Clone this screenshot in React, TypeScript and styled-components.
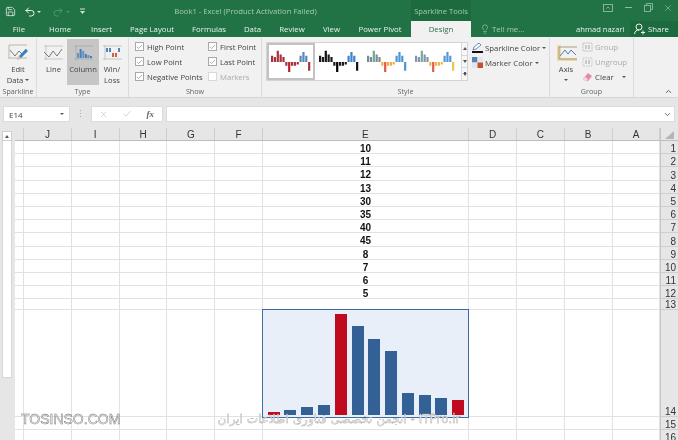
import React from "react";
import styled, { createGlobalStyle } from "styled-components";
import { Check, ChevronDown, ChevronUp, Lightbulb, Redo2, Save, Undo2, X } from "lucide-react";

const GlobalStyle = createGlobalStyle`
  html, body {
    margin: 0;
    padding: 0;
    overflow: hidden;
    background: #fff;
  }
  * {
    box-sizing: border-box;
  }
`;

const uiFont = `"Open Sans", "Noto Sans", sans-serif`;

const tabs: [string, number][] = [
  ["File", 38],
  ["Home", 44],
  ["Insert", 39],
  ["Page Layout", 62],
  ["Formulas", 52],
  ["Data", 35],
  ["Review", 44],
  ["View", 35],
  ["Power Pivot", 62],
];

const columns: [string, number][] = [
  ["", 9],
  ["J", 47.8],
  ["I", 47.8],
  ["H", 47.8],
  ["G", 47.8],
  ["F", 47.5],
  ["E", 206.5],
  ["D", 47.8],
  ["C", 47.8],
  ["B", 47.8],
  ["A", 47.8],
];

const cellValues = ["10", "11", "12", "13", "30", "35", "40", "45", "8", "7", "6", "5"];
const rowHeights = [...cellValues.map(() => 13.2), 10.5, 107, 13, 13];

const chartValues = [5, 6, 7, 8, 45, 40, 35, 30, 13, 12, 11, 10];
const redBars = [0, 4, 11];

const sparkValues = [5, 4, 9, 6, 4, -3, -8, -3, -3, -2, 5, 8, 5, -7];

const sparkStyles: { base: string; accent: string; neg: string; low: string; high: string; last: string }[] = [
  { base: "#a8323c", accent: "#5b86b8", neg: "#a8323c", low: "#b8202c", high: "#a8323c", last: "#a8323c" },
  { base: "#1c1c1c", accent: "#3f83c4", neg: "#1c1c1c", low: "#000", high: "#111", last: "#111" },
  { base: "#7d8a96", accent: "#4f96cf", neg: "#efb040", low: "#e2574a", high: "#68ad92", last: "#4f96cf" },
  { base: "#8794a8", accent: "#5a96d6", neg: "#f0b54a", low: "#e5584e", high: "#72ab9c", last: "#e8c64c" },
];

function MiniSpark({ scheme }: { scheme: number }) {
  const s = sparkStyles[scheme];
  return (
    <svg width="40" height="24" viewBox="0 0 40 24">
      {sparkValues.map((v, i) => {
        let fill = v < 0 ? s.neg : i < 2 || (i > 9 && i < 13) ? s.accent : s.base;
        if (i === 2) fill = s.high;
        if (i === 6) fill = s.low;
        if (i === 13) fill = s.last;
        if (i === 0 || i === 1) fill = scheme === 1 ? "#1c1c1c" : scheme === 0 ? "#a8323c" : s.base;
        const h = Math.abs(v) * 1.25;
        return <rect key={i} x={i * 2.85} y={v > 0 ? 12 - h : 12} width="2.200" height={h} fill={fill} />;
      })}
    </svg>
  );
}

function EditDataIcon() {
  return (
    <svg width="21" height="19" viewBox="0 0 21 19" fill="none">
      <path d="M1 1h18M1 1v14M1 14h18" stroke="#b5a58c" strokeWidth="0.8" />
      <path d="M2 6l5 6 4-5 3 3 4-5" stroke="#6a6a6a" strokeWidth="0.9" />
      <path d="M9 16l2-4 7-7 2 2-7 7z" fill="#3a7fc4" />
      <path d="M9 16l2-4 2 2z" fill="#e6c9a0" />
    </svg>
  );
}

function LineIcon() {
  return (
    <svg width="21" height="17" viewBox="0 0 21 17" fill="none">
      <path d="M1 2h19M1 15h19M3 1v15" stroke="#bdbdbd" strokeWidth="0.8" />
      <path d="M1 8l5 5 4-6 4 5 5-7" stroke="#6a6a6a" strokeWidth="0.9" />
    </svg>
  );
}

function ColumnIcon() {
  const bars = [5, 9, 7, 4, 3, 2];
  return (
    <svg width="21" height="17" viewBox="0 0 21 17">
      <path d="M1 2h19M1 15h19M3 1v15" stroke="#a8a8a8" strokeWidth="0.8" fill="none" />
      {bars.map((b, i) => (
        <rect key={i} x={4 + i * 2.6} y={14 - b} width="2" height={b} fill={i % 2 ? "#3f7fbf" : "#6a90b8"} />
      ))}
    </svg>
  );
}

function WinLossIcon() {
  return (
    <svg width="21" height="17" viewBox="0 0 21 17">
      <path d="M1 2h19M1 15h19M3 1v15" stroke="#bdbdbd" strokeWidth="0.8" fill="none" />
      <rect x="4" y="4" width="2" height="4" fill="#4f86bd" />
      <rect x="7" y="4" width="2" height="4" fill="#4f86bd" />
      <rect x="10" y="9" width="2" height="4" fill="#d1603f" />
      <rect x="13" y="9" width="2" height="4" fill="#d1603f" />
      <rect x="16" y="4" width="2" height="4" fill="#4f86bd" />
    </svg>
  );
}

function PenColorIcon() {
  return (
    <svg width="11" height="11" viewBox="0 0 11 11">
      <path d="M1 8l1-3 5-4 2 2-5 4z" fill="#fff" stroke="#3f74b0" strokeWidth="0.8" />
      <rect x="0" y="9" width="11" height="2" fill="#111" />
    </svg>
  );
}

function MarkerColorIcon() {
  return (
    <svg width="11" height="11" viewBox="0 0 11 11">
      <rect x="0" y="0" width="5.500" height="5.500" fill="#5a83b5" />
      <rect x="5.500" y="0" width="5.500" height="5.500" fill="#dfe6ee" />
      <rect x="0" y="5.500" width="5.500" height="5.500" fill="#dfe6ee" />
      <rect x="5.500" y="5.500" width="5.500" height="5.500" fill="#c9502f" />
    </svg>
  );
}

function AxisIcon() {
  return (
    <svg width="21" height="18" viewBox="0 0 21 18" fill="none">
      <rect x="1" y="1" width="4" height="14" fill="#f0d9a8" />
      <rect x="1" y="14" width="20" height="3" fill="#f0d9a8" />
      <path d="M3 3h18M3 3v12h18" stroke="#9b8a6a" strokeWidth="0.8" />
      <path d="M4 12l5-6 3 4 3-4 5 5" stroke="#4d7fb5" strokeWidth="1" />
    </svg>
  );
}

function GroupIcon({ dashed }: { dashed?: boolean }) {
  return (
    <svg width="11" height="10" viewBox="0 0 11 10" fill="none" stroke="#b9b9b9" strokeWidth="0.8">
      <rect x="1" y="1" width="9" height="8" strokeDasharray={dashed ? "1.4 1" : "2 0.6"} />
      <rect x="3" y="3" width="2" height="4" fill="#c9c9c9" stroke="none" />
      <rect x="6" y="3" width="2" height="4" fill="#c9c9c9" stroke="none" />
    </svg>
  );
}

function EraserIcon() {
  return (
    <svg width="11" height="10" viewBox="0 0 11 10">
      <path d="M1 7l5-6 4 3-4 5H3z" fill="#e58aa4" />
      <path d="M1 7l2-2 3 2-1.500 2H3z" fill="#f6d5de" />
    </svg>
  );
}

function ShareIcon() {
  return (
    <svg width="11" height="12" viewBox="0 0 11 12" fill="none" stroke="#eef5f0" strokeWidth="1">
      <circle cx="5" cy="4" r="3" />
      <path d="M0.500 11c0.500-3 2-4 4.500-4M7 9.500h4M9 7.500v4" />
    </svg>
  );
}

function MenuIcon() {
  return (
    <svg width="7" height="7" viewBox="0 0 7 7">
      <path d="M1 1h5" stroke="#cfe3d7" strokeWidth="1" />
      <path d="M1 3h5l-2.500 3z" fill="#cfe3d7" />
    </svg>
  );
}

function RestoreIcon() {
  return (
    <svg width="9" height="9" viewBox="0 0 9 9" fill="none" stroke="#8fbaa3" strokeWidth="0.9">
      <rect x="0.500" y="2.500" width="6" height="6" />
      <path d="M2.500 2.500v-2h6v6h-2" />
    </svg>
  );
}

function DisplayOptionsIcon() {
  return (
    <svg width="10" height="8" viewBox="0 0 10 8" fill="none" stroke="#8fbaa3" strokeWidth="0.9">
      <rect x="0.500" y="0.500" width="9" height="7" />
      <path d="M3.500 4.500L5 3l1.500 1.500" />
    </svg>
  );
}

function App() {
  return (
    <Page>
      <GlobalStyle />
      <TitleBar>
        <TopRow>
          <QuickAccess>
            <Save size={11} color="#eef5f0" strokeWidth={1.6} />
            <Undo2 size={12} color="#eef5f0" strokeWidth={2} />
            <Caret $color="#d5e6dc" />
            <Redo2 size={12} color="#4f9470" strokeWidth={2} />
            <Caret $color="#4f9470" />
            <MenuIcon />
          </QuickAccess>
          <WindowTitle>Book1 - Excel (Product Activation Failed)</WindowTitle>
          <ContextTitle>Sparkline Tools</ContextTitle>
          <WindowButtons>
            <ControlSlot>
              <DisplayOptionsIcon />
            </ControlSlot>
            <ControlSlot>
              <MinimizeBar />
            </ControlSlot>
            <ControlSlot>
              <RestoreIcon />
            </ControlSlot>
            <ControlSlot>
              <X size={10} color="#8fbaa3" strokeWidth={1.6} />
            </ControlSlot>
          </WindowButtons>
        </TopRow>
        <TabRow>
          {tabs.map(([name, w]) => (
            <Tab key={name} $w={w}>
              {name}
            </Tab>
          ))}
          <ActiveTab>Design</ActiveTab>
          <TellMe>
            <Lightbulb size={10} color="#b5d3c2" strokeWidth={1.4} />
            <span>Tell me...</span>
          </TellMe>
          <UserName>ahmad nazari</UserName>
          <ShareButton>
            <ShareIcon />
            <span>Share</span>
          </ShareButton>
        </TabRow>
      </TitleBar>

      <Ribbon>
        <RibbonGroup $w={37}>
          <GroupBody $pad="1px 0 0">
            <BigButton $w={36}>
              <BigIcon>
                <EditDataIcon />
              </BigIcon>
              <BigLabel>Edit</BigLabel>
              <BigLabel>
                Data <Caret $color="#555" />
              </BigLabel>
            </BigButton>
          </GroupBody>
          <GroupLabel>Sparkline</GroupLabel>
        </RibbonGroup>

        <RibbonGroup $w={92}>
          <GroupBody $pad="1px 4px 0 3px">
            <BigButton $w={27}>
              <BigIcon>
                <LineIcon />
              </BigIcon>
              <BigLabel>Line</BigLabel>
            </BigButton>
            <BigButton $w={32} $active>
              <BigIcon>
                <ColumnIcon />
              </BigIcon>
              <BigLabel>Column</BigLabel>
            </BigButton>
            <BigButton $w={26}>
              <BigIcon>
                <WinLossIcon />
              </BigIcon>
              <BigLabel>Win/</BigLabel>
              <BigLabel>Loss</BigLabel>
            </BigButton>
          </GroupBody>
          <GroupLabel>Type</GroupLabel>
        </RibbonGroup>

        <RibbonGroup $w={133}>
          <ShowGrid>
            <CheckRow>
              <CheckBox $checked>
                <Check size={8} color="#666" strokeWidth={1.8} />
              </CheckBox>
              High Point
            </CheckRow>
            <CheckRow>
              <CheckBox $checked>
                <Check size={8} color="#666" strokeWidth={1.8} />
              </CheckBox>
              First Point
            </CheckRow>
            <CheckRow>
              <CheckBox $checked>
                <Check size={8} color="#666" strokeWidth={1.8} />
              </CheckBox>
              Low Point
            </CheckRow>
            <CheckRow>
              <CheckBox $checked>
                <Check size={8} color="#666" strokeWidth={1.8} />
              </CheckBox>
              Last Point
            </CheckRow>
            <CheckRow>
              <CheckBox $checked>
                <Check size={8} color="#666" strokeWidth={1.8} />
              </CheckBox>
              Negative Points
            </CheckRow>
            <CheckRow $disabled>
              <CheckBox />
              Markers
            </CheckRow>
          </ShowGrid>
          <GroupLabel>Show</GroupLabel>
        </RibbonGroup>

        <RibbonGroup $w={288}>
          <GroupBody $pad="2px 0 0 4px">
            <Gallery>
              {sparkStyles.map((_, i) => (
                <GalleryItem key={i} $selected={i === 0}>
                  <MiniSpark scheme={i} />
                </GalleryItem>
              ))}
              <GalleryScroll>
                <ScrollStep>
                  <Triangle $up />
                </ScrollStep>
                <ScrollStep>
                  <Triangle />
                </ScrollStep>
                <ScrollStep>
                  <Triangle $line />
                </ScrollStep>
              </GalleryScroll>
            </Gallery>
            <ColorMenu>
              <MenuRow>
                <PenColorIcon />
                Sparkline Color <Caret $color="#555" />
              </MenuRow>
              <MenuRow>
                <MarkerColorIcon />
                Marker Color <Caret $color="#555" />
              </MenuRow>
            </ColorMenu>
          </GroupBody>
          <GroupLabel>Style</GroupLabel>
        </RibbonGroup>

        <RibbonGroup $w={84}>
          <GroupBody $pad="1px 0 0 2px">
            <BigButton $w={28}>
              <BigIcon>
                <AxisIcon />
              </BigIcon>
              <BigLabel>Axis</BigLabel>
              <AxisCaret>
                <Caret $color="#555" />
              </AxisCaret>
            </BigButton>
            <GroupMenu>
              <MenuRow $disabled>
                <GroupIcon />
                Group
              </MenuRow>
              <MenuRow $disabled>
                <GroupIcon dashed />
                Ungroup
              </MenuRow>
              <MenuRow>
                <EraserIcon />
                Clear&nbsp;&nbsp;&nbsp;
                <Caret $color="#555" />
              </MenuRow>
            </GroupMenu>
          </GroupBody>
          <GroupLabel>Group</GroupLabel>
        </RibbonGroup>

        <Collapse>
          <ChevronUp size={9} color="#555" strokeWidth={2.4} />
        </Collapse>
      </Ribbon>

      <FormulaBar>
        <NameBox>
          E14
          <Caret $color="#555" />
        </NameBox>
        <Grip>⋮</Grip>
        <FormulaButtons>
          <X size={9} color="#bbb" strokeWidth={1.6} />
          <Check size={10} color="#bbb" strokeWidth={1.6} />
          <FxText>fx</FxText>
        </FormulaButtons>
        <FormulaInput>
          <ChevronDown size={9} color="#555" strokeWidth={2.2} />
        </FormulaInput>
      </FormulaBar>

      <Sheet>
        <ScrollGutter>
          <ScrollUp>
            <Triangle $up />
          </ScrollUp>
          <ScrollThumb />
        </ScrollGutter>

        <SheetMain>
          <ColumnHeader>
            {columns.map(([name, w], i) => (
              <ColumnName key={i} $w={w}>
                {name}
              </ColumnName>
            ))}
          </ColumnHeader>
          {rowHeights.map((h, r) => (
            <GridRow key={r} style={{ height: h }}>
              {columns.map(([name, w], c) => (
                <Cell key={c} $w={w}>
                  {name === "E" && cellValues[r]}
                  {name === "E" && r === 13 && (
                    <SparkCell>
                      {chartValues.map((v, i) => (
                        <SparkBar
                          key={i}
                          $red={redBars.includes(i)}
                          style={{ height: (v - 4) * 2.46 }}
                        />
                      ))}
                    </SparkCell>
                  )}
                </Cell>
              ))}
            </GridRow>
          ))}
        </SheetMain>

        <RowHeader>
          <CornerBox>
            <Corner />
          </CornerBox>
          {rowHeights.map((h, r) => (
            <RowNumber key={r} style={{ height: h }}>
              {r + 1}
            </RowNumber>
          ))}
        </RowHeader>

        <WatermarkLeft>TOSINSO.COM</WatermarkLeft>
        <WatermarkCenter dir="rtl">ITPro.ir - انجمن تخصصی فناوری اطلاعات ایران</WatermarkCenter>
      </Sheet>
    </Page>
  );
}

export default App;

const Page = styled.div`
  width: 678px;
  height: 440px;
  overflow: hidden;
  background: #fff;
  font-family: ${uiFont};
  font-size: 8px;
  color: #444;
  filter: blur(0.3px);
`;

const TitleBar = styled.header`
  background: #217346;
  height: 37px;
  display: flex;
  flex-direction: column;
`;

const TopRow = styled.div`
  height: 21px;
  display: flex;
`;

const QuickAccess = styled.div`
  width: 100px;
  padding: 2px 0 0 5px;
  display: flex;
  align-items: center;
  & > :nth-child(1) {
    margin-right: 8px;
  }
  & > :nth-child(2) {
    margin-right: 1px;
  }
  & > :nth-child(3) {
    margin-right: 11px;
  }
  & > :nth-child(4) {
    margin-right: 2px;
  }
  & > :nth-child(5) {
    margin-right: 9px;
  }
`;

const WindowTitle = styled.div`
  width: 311px;
  padding-right: 20px;
  text-align: center;
  line-height: 23px;
  color: #a5cbb5;
  font-size: 7.7px;
  white-space: nowrap;
`;

const ContextTitle = styled.div`
  width: 60px;
  background: #1c6a3e;
  color: #a5cbb5;
  text-align: center;
  line-height: 23px;
  font-size: 7.6px;
  white-space: nowrap;
`;

const WindowButtons = styled.div`
  flex: 1;
  display: flex;
  justify-content: flex-end;
  padding-bottom: 6px;
`;

const ControlSlot = styled.div`
  width: 20px;
  display: flex;
  align-items: center;
  justify-content: center;
`;

const MinimizeBar = styled.span`
  width: 7px;
  height: 1px;
  background: #8fbaa3;
`;

const TabRow = styled.nav`
  height: 16px;
  display: flex;
  align-items: stretch;
`;

const Tab = styled.div<{ $w: number }>`
  width: ${(p) => p.$w}px;
  text-align: center;
  color: #e8f2ec;
  font-size: 7.8px;
  line-height: 16px;
  white-space: nowrap;
`;

const ActiveTab = styled.div`
  width: 60px;
  background: #f1f1f1;
  color: #2f6f4c;
  text-align: center;
  font-size: 7.8px;
  line-height: 16px;
`;

const TellMe = styled.div`
  width: 105px;
  padding-left: 9px;
  display: flex;
  align-items: center;
  gap: 2px;
  color: #a5cbb5;
  font-size: 7.8px;
`;

const UserName = styled.div`
  width: 54px;
  color: #e8f2ec;
  line-height: 16px;
  font-size: 7.6px;
  white-space: nowrap;
`;

const ShareButton = styled.div`
  flex: 1;
  background: #1c6a3e;
  display: flex;
  align-items: center;
  gap: 3px;
  padding-left: 4px;
  color: #eef5f0;
  font-size: 7.8px;
`;

const Ribbon = styled.section`
  height: 61px;
  background: #f1f1f1;
  border-bottom: 1px solid #d6d6d6;
  display: flex;
`;

const RibbonGroup = styled.div<{ $w: number }>`
  width: ${(p) => p.$w}px;
  height: 59px;
  display: flex;
  flex-direction: column;
  border-right: 1px solid #dcdcdc;
  margin-top: 1px;
`;

const GroupBody = styled.div<{ $pad: string }>`
  flex: 1;
  display: flex;
  padding: ${(p) => p.$pad};
  min-height: 0;
`;

const GroupLabel = styled.div`
  height: 13px;
  padding-top: 2px;
  text-align: center;
  line-height: 11px;
  font-size: 7.2px;
  color: #666;
`;

const BigButton = styled.div<{ $w: number; $active?: boolean }>`
  width: ${(p) => p.$w}px;
  height: 46px;
  padding-top: 5px;
  display: flex;
  flex-direction: column;
  align-items: center;
  flex-shrink: 0;
  background: ${(p) => (p.$active ? "#c6c6c6" : "transparent")};
`;

const BigIcon = styled.div`
  height: 20px;
  flex-shrink: 0;
`;

const BigLabel = styled.div`
  line-height: 10.5px;
  font-size: 7.6px;
  color: #444;
  white-space: nowrap;
`;

const AxisCaret = styled.div`
  line-height: 10.5px;
`;

const Caret = styled.span<{ $color: string }>`
  display: inline-block;
  width: 0;
  height: 0;
  vertical-align: middle;
  border-left: 2px solid transparent;
  border-right: 2px solid transparent;
  border-top: 2px solid ${(p) => p.$color};
`;

const ShowGrid = styled.div`
  flex: 1;
  display: grid;
  grid-template-columns: 73px 1fr;
  grid-auto-rows: 15px;
  padding: 1px 0 0 6px;
`;

const CheckRow = styled.div<{ $disabled?: boolean }>`
  display: flex;
  align-items: center;
  gap: 3px;
  white-space: nowrap;
  font-size: 7.7px;
  color: ${(p) => (p.$disabled ? "#aaa" : "#444")};
`;

const CheckBox = styled.span<{ $checked?: boolean }>`
  width: 9px;
  height: 9px;
  flex-shrink: 0;
  background: #fff;
  border: 1px solid ${(p) => (p.$checked ? "#a8a8a8" : "#d8d8d8")};
  display: flex;
  align-items: center;
  justify-content: center;
`;

const Gallery = styled.div`
  width: 202px;
  height: 39px;
  margin-top: 2px;
  background: #fff;
  border: 1px solid #d4d4d4;
  display: flex;
  flex-shrink: 0;
`;

const GalleryItem = styled.div<{ $selected?: boolean }>`
  width: 48px;
  display: flex;
  align-items: center;
  justify-content: center;
  border: ${(p) => (p.$selected ? "2px solid #c2c2c2" : "none")};
`;

const GalleryScroll = styled.div`
  flex: 1;
  margin-left: 2px;
  display: flex;
  flex-direction: column;
  border-left: 1px solid #d8d8d8;
`;

const ScrollStep = styled.div`
  flex: 1;
  display: flex;
  align-items: center;
  justify-content: center;
  border-bottom: 1px solid #d8d8d8;
  background: #f7f7f7;
  &:last-child {
    border-bottom: none;
  }
`;

const Triangle = styled.span<{ $up?: boolean; $line?: boolean }>`
  width: 0;
  height: 0;
  border-left: 2.5px solid transparent;
  border-right: 2.5px solid transparent;
  ${(p) => (p.$up ? "border-bottom: 3px solid #555;" : "border-top: 3px solid #555;")}
  ${(p) => p.$line && "box-shadow: 0 -2px 0 -1px #555;"}
`;

const ColorMenu = styled.div`
  margin-left: 4px;
  display: flex;
  flex-direction: column;
`;

const MenuRow = styled.div<{ $disabled?: boolean }>`
  height: 15px;
  display: flex;
  align-items: center;
  gap: 2px;
  white-space: nowrap;
  font-size: 7.8px;
  color: ${(p) => (p.$disabled ? "#aaa" : "#444")};
  svg {
    flex-shrink: 0;
  }
`;

const GroupMenu = styled.div`
  margin-left: 2px;
  display: flex;
  flex-direction: column;
`;

const Collapse = styled.div`
  flex: 1;
  display: flex;
  align-items: flex-end;
  justify-content: center;
  padding: 0 0 1px 25px;
`;

const FormulaBar = styled.section`
  height: 30px;
  background: #e6e6e6;
  padding: 8px 3px 6px;
  display: flex;
  align-items: stretch;
`;

const NameBox = styled.div`
  width: 67px;
  background: #fff;
  border: 1px solid #dcdcdc;
  padding: 0 5px;
  display: flex;
  align-items: center;
  justify-content: space-between;
  font-size: 8px;
  color: #444;
`;

const Grip = styled.div`
  width: 21px;
  text-align: center;
  color: #aaa;
  line-height: 16px;
  font-size: 9px;
`;

const FormulaButtons = styled.div`
  width: 72px;
  background: #fff;
  border: 1px solid #dcdcdc;
  padding: 0 8px 0 7px;
  display: flex;
  align-items: center;
  justify-content: space-between;
`;

const FxText = styled.i`
  font-family: "Liberation Serif", serif;
  font-size: 9px;
  font-weight: bold;
  color: #666;
`;

const FormulaInput = styled.div`
  flex: 1;
  margin-left: 3px;
  background: #fff;
  border: 1px solid #dcdcdc;
  display: flex;
  align-items: center;
  justify-content: flex-end;
  padding-right: 2px;
`;

const Sheet = styled.section`
  position: relative;
  height: 312px;
  display: flex;
  background: #e6e6e6;
`;

const ScrollGutter = styled.div`
  width: 15px;
  flex-shrink: 0;
  padding: 3px 0 0 2px;
  display: flex;
  flex-direction: column;
`;

const ScrollUp = styled.div`
  width: 10px;
  height: 10px;
  background: #fff;
  border: 1px solid #cfcfcf;
  display: flex;
  align-items: center;
  justify-content: center;
`;

const ScrollThumb = styled.div`
  width: 10px;
  height: 237px;
  background: #fff;
  border: 1px solid #d6d6d6;
  border-top: none;
`;

const SheetMain = styled.div`
  width: 645px;
  flex-shrink: 0;
  background: #fff;
`;

const ColumnHeader = styled.div`
  height: 13px;
  display: flex;
  background: #e6e6e6;
  border-bottom: 1px solid #bdbdbd;
`;

const ColumnName = styled.div<{ $w: number }>`
  width: ${(p) => p.$w}px;
  flex-shrink: 0;
  text-align: center;
  line-height: 13px;
  font-family: "Liberation Sans", Arial, sans-serif;
  font-size: 10px;
  color: #333;
  border-right: 1px solid #cfcfcf;
`;

const GridRow = styled.div`
  display: flex;
  border-bottom: 1px solid #e3e0e6;
`;

const Cell = styled.div<{ $w: number }>`
  position: relative;
  width: ${(p) => p.$w}px;
  flex-shrink: 0;
  border-right: 1px solid #e3e0e6;
  text-align: center;
  font-family: "Liberation Sans", Arial, sans-serif;
  font-size: 10px;
  font-weight: bold;
  line-height: 15px;
  color: #111;
`;

const SparkCell = styled.div`
  position: absolute;
  inset: -1px -1px -2px -1px;
  background: #e8eff9;
  border: 1.5px solid #3f6aa3;
  padding: 0 4px 2px 5px;
  display: flex;
  align-items: flex-end;
  justify-content: space-between;
  z-index: 1;
`;

const SparkBar = styled.div<{ $red: boolean }>`
  width: 12px;
  background: ${(p) => (p.$red ? "#c00a1e" : "#336195")};
`;

const RowHeader = styled.div`
  flex: 1;
  background: #e6e6e6;
  border-left: 1px solid #c6c6c6;
`;

const CornerBox = styled.div`
  height: 13px;
  border-bottom: 1px solid #bdbdbd;
  padding: 3px 0 0 4px;
`;

const Corner = styled.div`
  width: 0;
  height: 0;
  border-left: 9px solid transparent;
  border-bottom: 8px solid #b5b5b5;
`;

const RowNumber = styled.div`
  display: flex;
  align-items: flex-end;
  justify-content: flex-end;
  padding-right: 2px;
  font-family: "Liberation Sans", Arial, sans-serif;
  font-size: 10px;
  line-height: 9px;
  color: #333;
  border-bottom: 1px solid #cfcfcf;
`;

const WatermarkLeft = styled.div`
  position: absolute;
  left: 21px;
  top: 283px;
  z-index: 2;
  font-family: "Liberation Sans", Arial, sans-serif;
  font-size: 14px;
  line-height: 16px;
  color: #eee;
  -webkit-text-stroke: 0.4px #666;
  white-space: nowrap;
`;

const WatermarkCenter = styled.div`
  position: absolute;
  left: 214px;
  width: 250px;
  top: 283px;
  z-index: 2;
  font-family: "DejaVu Sans", sans-serif;
  font-size: 12px;
  line-height: 16px;
  color: #eee;
  -webkit-text-stroke: 0.3px #999;
  white-space: nowrap;
  text-align: center;
`;
